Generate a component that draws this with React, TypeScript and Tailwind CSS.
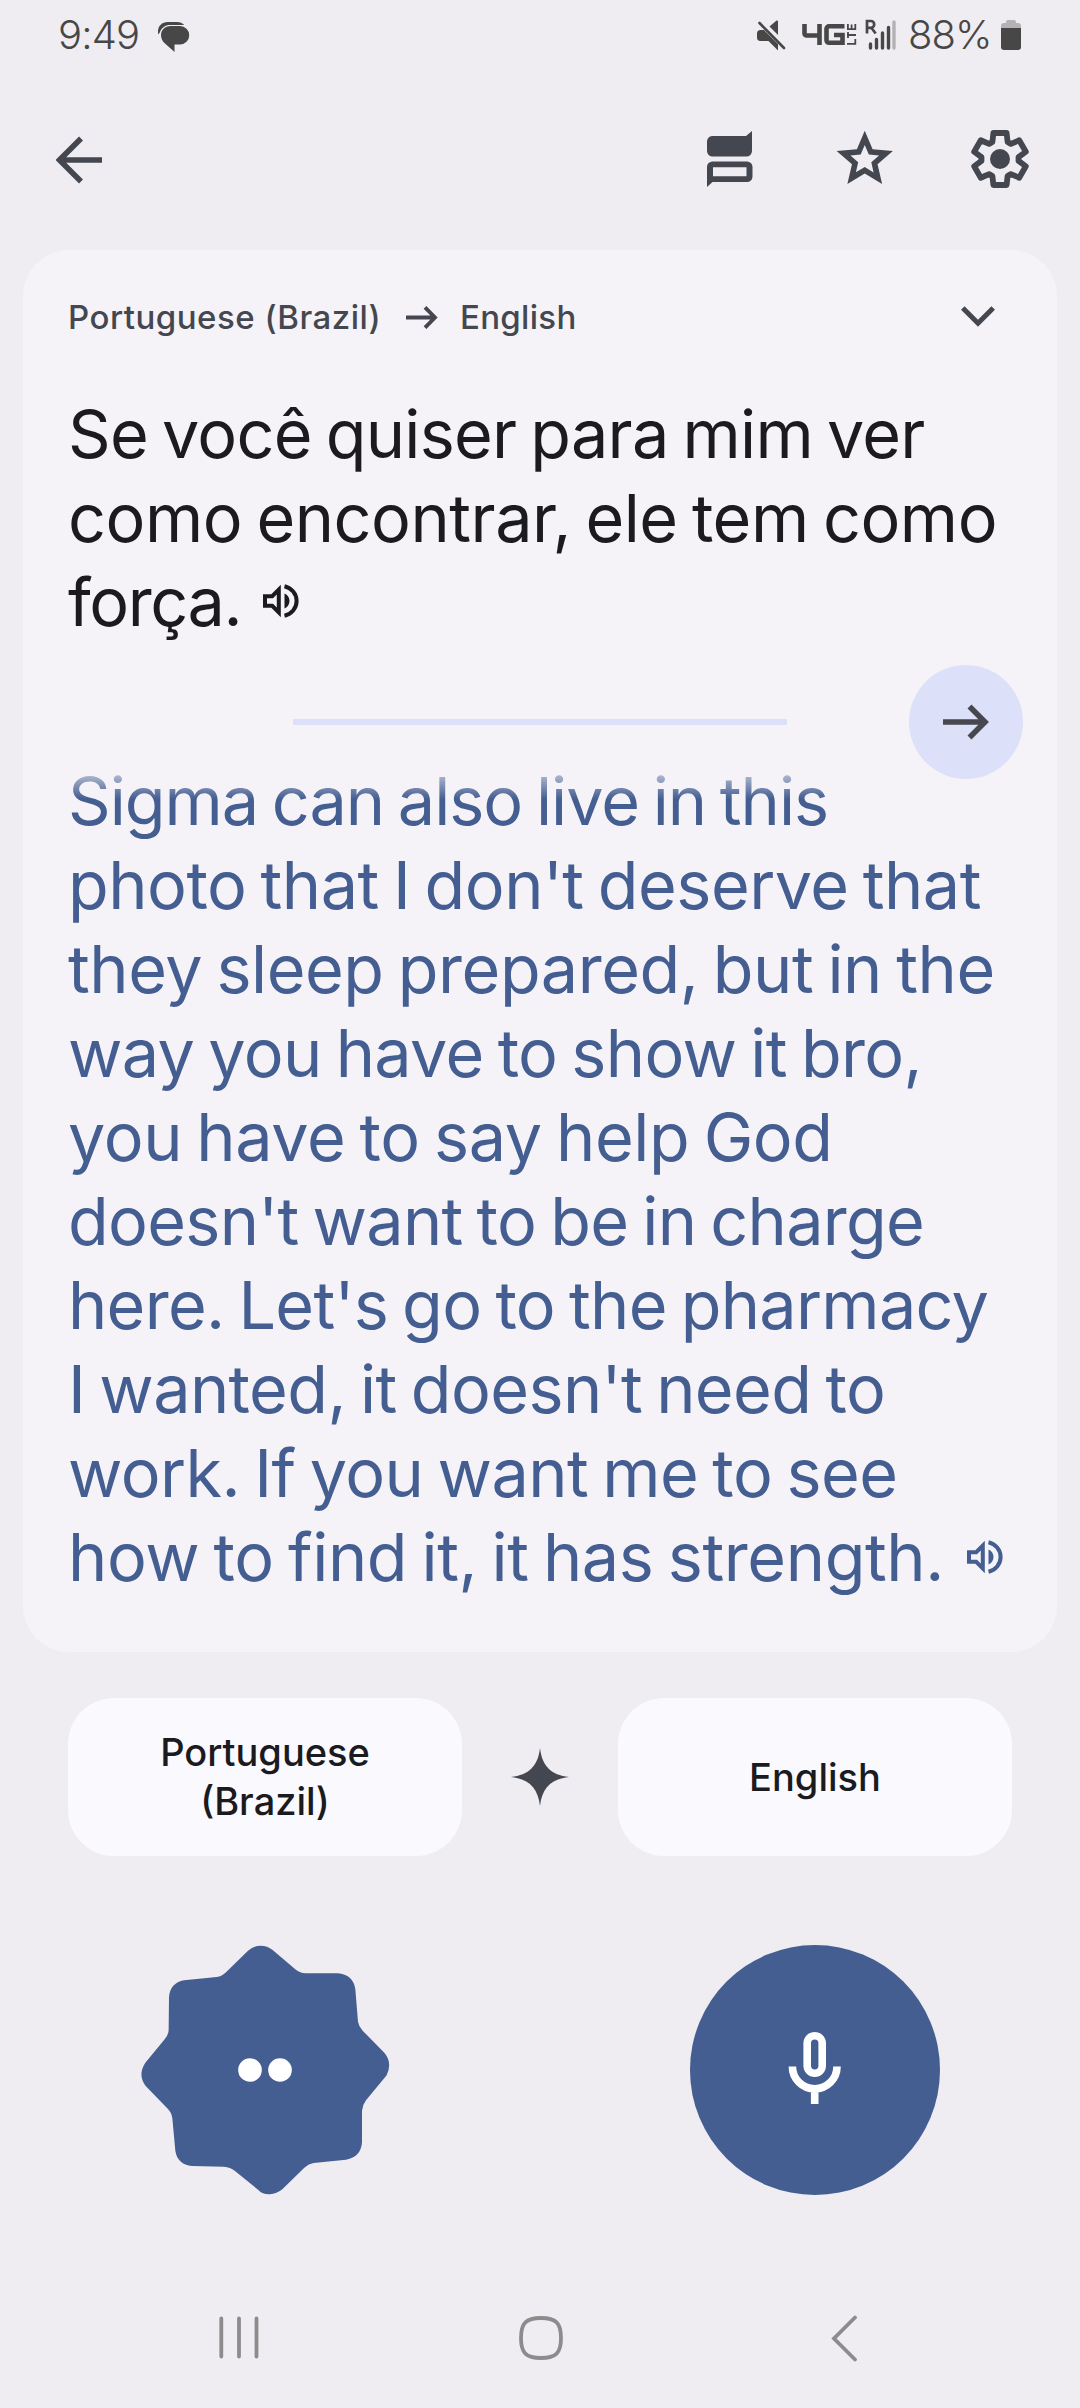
import type { ReactNode } from 'react';

interface TextLine {
  text: string;
  className: string;
}

const sourceLines: TextLine[] = [
  { text: 'Se você quiser para mim ver', className: 'tracking-[-0.73px]' },
  { text: 'como encontrar, ele tem como', className: 'tracking-[-0.46px]' },
  { text: 'força.', className: 'tracking-[-1.4px]' },
];

const translatedLines: TextLine[] = [
  { text: 'Sigma can also live in this', className: 'tracking-[-1px]' },
  { text: "photo that I don't deserve that", className: 'tracking-[-0.5px]' },
  { text: 'they sleep prepared, but in the', className: 'tracking-[-0.45px]' },
  { text: 'way you have to show it bro,', className: 'tracking-[-0.65px]' },
  { text: 'you have to say help God', className: 'tracking-[-0.4px]' },
  { text: "doesn't want to be in charge", className: 'tracking-[-0.7px]' },
  { text: "here. Let's go to the pharmacy", className: 'tracking-[-0.7px]' },
  { text: "I wanted, it doesn't need to", className: 'tracking-[-0.6px]' },
  { text: 'work. If you want me to see', className: 'tracking-[-0.55px]' },
  { text: 'how to find it, it has strength.', className: 'tracking-[-0.4px]' },
];

// One tooth of the settings gear, repeated every 60 degrees
const tooth = [
  [-7.6, -17],
  [-6.6, -26],
  [6.6, -26],
  [7.6, -17],
];

const gearPoints = [0, 60, 120, 180, 240, 300]
  .flatMap((deg) => {
    const a = (deg * Math.PI) / 180;
    return tooth.map(([x, y]) =>
      `${(x * Math.cos(a) - y * Math.sin(a)).toFixed(2)},${(x * Math.sin(a) + y * Math.cos(a)).toFixed(2)}`
    );
  })
  .join(' ');

const SpeakerIcon = () => (
  <svg width="36" height="34" viewBox="0 0 36 34" fill="none">
    <path d="M2 12.2h7.2L15.8 5.6v22.8L9.2 21.8H2z" stroke="currentColor" strokeWidth="4" />
    <path d="M21.5 9.5c3.2 1.4 5 4.2 5 7.5s-1.8 6.1-5 7.5z" fill="currentColor" />
    <path d="M21.5 2.3C28.5 4 33.6 9.8 33.6 17s-5.1 13-12.1 14.7" stroke="currentColor" strokeWidth="4" />
  </svg>
);

const StatusBar = () => (
  <div className="flex h-[70px] shrink-0 items-start justify-between pl-[58px] pr-[58px] pt-[15px] text-[#474747]">
    <div className="flex items-start">
      <span className="w-[100px] whitespace-nowrap text-[40px] font-light leading-[40px] tracking-[-0.8px]">9:49</span>
      <svg className="mt-[6px]" width="32" height="32" viewBox="0 0 32 32" fill="currentColor">
        <path d="M12.5 5h9.500a9.200 9.200 0 0 1 0 18.500h-5.500V31L7 22.500C4.800 20.500 3 17.800 3 14.200 3 9 7 5 12.500 5z" />
        <path d="M0 13.500V9.500C.6 4.500 4.400 1 9.500 1H19c3 0 5.600 1 7.200 3H12C7.500 4 3.500 6.500 1.800 11.500z" />
      </svg>
    </div>
    <div className="flex items-start">
      <svg className="mt-[4px]" width="32" height="32" viewBox="0 0 32 32" fill="currentColor">
        <path d="M4.500 11H8l14 14v6.500L12.500 22H4.500C2 22 1 20.500 1 18.500v-4C1 12.300 2.200 11 4.500 11z" />
        <path d="M13.500 7.500 20 2c1-.8 2-.5 2 1v13z" />
        <path d="M3.500 4 28 29" stroke="currentColor" strokeWidth="2.600" strokeLinecap="round" />
      </svg>
      <svg className="ml-[14px] mt-[4px]" width="56" height="32" viewBox="0 0 56 32" fill="none" stroke="currentColor">
        <path d="M2.500 5v9.500a2 2 0 0 0 2 2H19M17.500 5v21" strokeWidth="4.600" />
        <path d="M42.500 7.300H27a2.500 2.500 0 0 0-2.500 2.500v11.500a2.500 2.500 0 0 0 2.500 2.500h13.500V16H32" strokeWidth="4.600" />
        <path d="M45 24.800h8.300V20M45 16h9M46 19v-6M45.900 5v5.200h7.400V5M49.600 10V5.500" strokeWidth="1.800" />
      </svg>
      <svg className="ml-[6px] mt-[4px]" width="34" height="32" viewBox="0 0 34 32" fill="none" stroke="currentColor">
        <path d="M3 14.500V2h3.800a3.400 3.400 0 0 1 0 6.800H3M7.500 9l4.200 5.500" strokeWidth="2.700" />
        <path d="M6.500 25v4M12.500 20.500v8.500M18.500 14v15M24.500 8.500v20.500" strokeWidth="3.400" strokeLinecap="round" />
        <path d="M30 3v26" stroke="#b3b3b6" strokeWidth="3.400" strokeLinecap="round" />
      </svg>
      <span className="ml-[10px] w-[87px] whitespace-nowrap text-[40px] font-light leading-[40px] tracking-[-1px]">88%</span>
      <svg className="ml-[5px] mt-[4px]" width="22" height="32" viewBox="0 0 22 32">
        <path d="M6 4V3q0-2 2-2h6q2 0 2 2v1h2q3 0 3 3v3H1V7q0-3 3-3z" fill="#b3b3b6" />
        <path d="M1 9h20v19q0 3-3 3H4q-3 0-3-3z" fill="currentColor" />
      </svg>
    </div>
  </div>
);

const TopBar = () => (
  <div className="flex h-[180px] shrink-0 items-start justify-between pl-[56px] pr-[50px] pt-[60px] text-[#444750]">
    <svg className="mt-[6px]" width="48" height="48" viewBox="0 0 48 48" fill="none" stroke="currentColor" strokeWidth="5.600">
      <path d="M46 24H5M25 2.500 3.500 24 25 45.500" />
    </svg>
    <div className="flex items-start">
      <svg width="48" height="60" viewBox="0 0 48 60">
        <path d="M6 6h34l6-5v20a5.500 5.500 0 0 1-5.500 5.500h-34A5.500 5.500 0 0 1 1 21V11.500A5.500 5.500 0 0 1 6 6z" fill="currentColor" />
        <path d="M1 57V37a5.500 5.500 0 0 1 5.500-5.500h34.500a5.500 5.500 0 0 1 5.500 5.500v9.500a5.500 5.500 0 0 1-5.500 5.500H6.500zM7 37.200v9h33.500v-9z" fill="currentColor" fillRule="evenodd" />
      </svg>
      <svg className="-mt-[5px] ml-[77px]" width="67.500" height="67.500" viewBox="0 -960 960 960" fill="currentColor">
        <path d="m354-287 126-76 126 77-33-144 111-96-146-13-58-136-58 135-146 13 111 97-33 143ZM233-120l65-281L80-590l288-25 112-265 112 265 288 25-218 189 65 281-247-149-247 149Z" />
      </svg>
      <svg className="-mt-[1px] ml-[72px]" width="60" height="60" viewBox="-30 -30 60 60">
        <polygon points={gearPoints} fill="none" stroke="currentColor" strokeWidth="5.800" strokeLinejoin="round" />
        <circle r="10" fill="currentColor" />
      </svg>
    </div>
  </div>
);

const LineBlock = ({ lines, icon }: { lines: TextLine[]; icon: ReactNode }) => (
  <div className="text-[66.500px] leading-[84px] [word-spacing:-4px]">
    {lines.map((line, index) => (
      <div key={line.text} className="flex h-[84px] items-center whitespace-nowrap">
        <span className={line.className}>{line.text}</span>
        {index === lines.length - 1 && icon}
      </div>
    ))}
  </div>
);

const TranslationCard = () => (
  <section className="mx-[23px] flex h-[1402px] shrink-0 flex-col rounded-[46px] bg-[#f5f3f8] pl-[45px] pr-[34px]">
    <div className="flex h-[142px] shrink-0 items-start pt-[46px] text-[#444750]">
      <span className="w-[338px] whitespace-nowrap text-[33px] font-medium leading-[42px] tracking-[0.5px]">Portuguese (Brazil)</span>
      <svg className="mt-[10px]" width="32" height="23" viewBox="0 0 32 23" fill="none" stroke="currentColor" strokeWidth="3.800">
        <path d="M0 11.500h28M19 1.300 29 11.500 19 21.700" />
      </svg>
      <span className="ml-[22px] whitespace-nowrap text-[33px] font-medium leading-[42px] tracking-[0.3px]">English</span>
      <svg className="ml-auto mr-[28px] mt-[10px]" width="34" height="22" viewBox="0 0 34 22" fill="none" stroke="currentColor" strokeWidth="5">
        <path d="M1.800 2 17 17.200 32.200 2" />
      </svg>
    </div>

    <div className="text-[#1b1b1f]">
      <LineBlock lines={sourceLines} icon={<span className="-mt-[2px] ml-[22px]"><SpeakerIcon /></span>} />
    </div>

    <div className="mt-[21px] flex h-[114px] shrink-0 items-center">
      <div className="ml-[225px] h-[6px] w-[494px] bg-[#dce1f9]" />
      <div className="ml-auto flex size-[114px] items-center justify-center rounded-full bg-[#dce1f9]">
        <svg width="46" height="36" viewBox="0 0 46 36" fill="none" stroke="#474750" strokeWidth="5.600">
          <path d="M0 18h41M26.500 2.500 42 18 26.500 33.500" />
        </svg>
      </div>
    </div>

    <div className="-mr-[34px] -mt-[20px] text-[#445e91] [mask-image:linear-gradient(to_bottom,transparent_0px,black_40px)]">
      <LineBlock lines={translatedLines} icon={<span className="ml-[23px]"><SpeakerIcon /></span>} />
    </div>
  </section>
);

const LanguageButton = ({ children }: { children: ReactNode }) => (
  <button className="flex h-[158px] w-[394px] items-center justify-center rounded-[46px] bg-[#faf9fe] text-center text-[38px] font-medium leading-[49px] text-[#1b1b1f]">
    {children}
  </button>
);

const App = () => {
  return (
    <div className="flex h-[2408px] w-[1080px] flex-col overflow-hidden bg-[#efedf2] font-['Inter',sans-serif]">
      <StatusBar />
      <TopBar />
      <TranslationCard />

      <div className="mx-[68px] mt-[46px] flex shrink-0 items-center justify-between">
        <LanguageButton>Portuguese<br />(Brazil)</LanguageButton>
        <svg width="58" height="58" viewBox="-29 -29 58 58" fill="#444750">
          <path d="M0-29C2-11 11-2 29 0 11 2 2 11 0 29-2 11-11 2-29 0-11-2-2-11 0-29z" />
        </svg>
        <LanguageButton>English</LanguageButton>
      </div>

      <div className="mx-[140px] mt-[89px] flex shrink-0 items-center justify-between">
        <svg width="250" height="250" viewBox="60 75 750 750">
          <path
            d="M384 92Q402 77 422 77T458 90L525 147Q538 159 557 160H653Q699 163 706 208L714 305Q716 319 728 332L793 398Q818 428 800 466L738 541Q727 556 726 572V667Q723 711 678 719L581 729Q566 731 553 743L487 808Q470 822 449 823T415 810L344 752Q331 741 312 740L216 738Q172 733 166 692L157 595Q155 577 141 564L77 498Q52 465 76 428L134 358Q146 344 146 328L147 232Q150 189 192 181L290 171Q306 169 318 157z"
            fill="#445e91"
          />
          <circle cx="390" cy="450" r="35.500" fill="#fff" />
          <circle cx="480" cy="450" r="35.500" fill="#fff" />
        </svg>
        <button className="flex size-[250px] items-center justify-center rounded-full bg-[#445e91]">
          <svg className="mb-[4px]" width="54" height="72" viewBox="0 0 54 72" fill="none" stroke="#fff" strokeWidth="7.600">
            <rect x="19.200" y="3.800" width="15" height="37.500" rx="7.500" />
            <path d="M4.400 34.500a22.300 22.300 0 0 0 44.600 0M26.700 56v16" />
          </svg>
        </button>
      </div>

      <nav className="mt-[120px] flex shrink-0 items-start justify-between pl-[218px] pr-[222px]">
        <svg width="42" height="46" viewBox="0 0 42 46" stroke="#8c8c8c" strokeWidth="3.800" strokeLinecap="round">
          <path d="M3.300 3.500v38M21 3.500v38M38.500 3.500v38" />
        </svg>
        <svg className="mr-[8px]" width="46" height="46" viewBox="0 0 46 46" fill="none" stroke="#8c8c8c" strokeWidth="3.800">
          <path d="M23 3C8 3 3 8 3 23s5 20 20 20 20-5 20-20S38 3 23 3z" />
        </svg>
        <svg width="28" height="48" viewBox="0 0 28 48" fill="none" stroke="#8c8c8c" strokeWidth="3.800" strokeLinecap="round">
          <path d="M25 2.500 4 23.500l21 21" />
        </svg>
      </nav>
    </div>
  );
};

export default App;
